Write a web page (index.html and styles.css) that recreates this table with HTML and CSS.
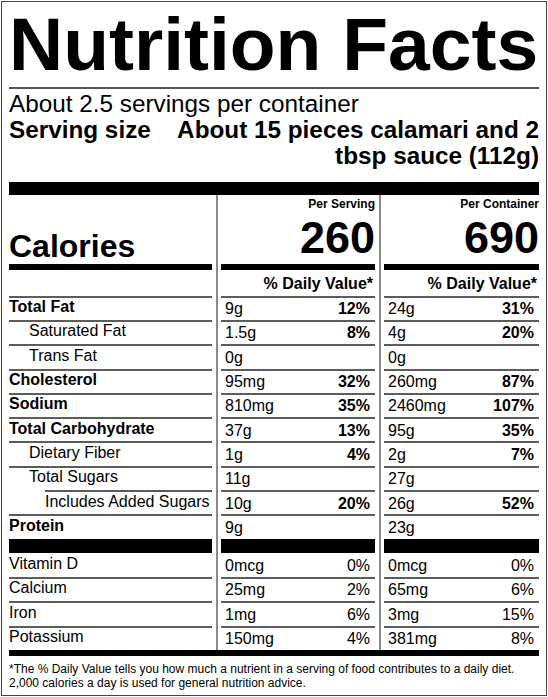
FILE: index.html
```html
<!DOCTYPE html>
<html lang="en">
<head>
<meta charset="utf-8">
<title>Nutrition Facts</title>
<link rel="stylesheet" href="styles.css">
</head>
<body>
<section class="label">
  <h1 class="title">Nutrition Facts</h1>
  <p class="servings">About 2.5 servings per container</p>
  <div class="serving-size">
    <span class="ss-label">Serving size</span>
    <span class="ss-value">About 15 pieces calamari and 2 tbsp sauce (112g)</span>
  </div>
  <div class="bar-top"></div>

  <div class="facts">
    <div class="row cal">
      <div class="cal-label">Calories</div>
      <div class="cal-val"><span class="per">Per Serving</span><span class="big">260</span></div>
      <div class="cal-val"><span class="per">Per Container</span><span class="big">690</span></div>
    </div>
    <div class="row dv-head">
      <div></div>
      <div class="dv">% Daily Value*</div>
      <div class="dv">% Daily Value*</div>
    </div>

    <div class="row">
      <div class="name b">Total Fat</div>
      <div class="val"><span>9g</span><span class="b">12%</span></div>
      <div class="val"><span>24g</span><span class="b">31%</span></div>
    </div>
    <div class="row">
      <div class="name sub">Saturated Fat</div>
      <div class="val"><span>1.5g</span><span class="b">8%</span></div>
      <div class="val"><span>4g</span><span class="b">20%</span></div>
    </div>
    <div class="row">
      <div class="name sub">Trans Fat</div>
      <div class="val"><span>0g</span></div>
      <div class="val"><span>0g</span></div>
    </div>
    <div class="row">
      <div class="name b">Cholesterol</div>
      <div class="val"><span>95mg</span><span class="b">32%</span></div>
      <div class="val"><span>260mg</span><span class="b">87%</span></div>
    </div>
    <div class="row">
      <div class="name b">Sodium</div>
      <div class="val"><span>810mg</span><span class="b">35%</span></div>
      <div class="val"><span>2460mg</span><span class="b">107%</span></div>
    </div>
    <div class="row">
      <div class="name b">Total Carbohydrate</div>
      <div class="val"><span>37g</span><span class="b">13%</span></div>
      <div class="val"><span>95g</span><span class="b">35%</span></div>
    </div>
    <div class="row">
      <div class="name sub">Dietary Fiber</div>
      <div class="val"><span>1g</span><span class="b">4%</span></div>
      <div class="val"><span>2g</span><span class="b">7%</span></div>
    </div>
    <div class="row">
      <div class="name sub">Total Sugars</div>
      <div class="val"><span>11g</span></div>
      <div class="val"><span>27g</span></div>
    </div>
    <div class="row">
      <div class="name sub2">Includes Added Sugars</div>
      <div class="val"><span>10g</span><span class="b">20%</span></div>
      <div class="val"><span>26g</span><span class="b">52%</span></div>
    </div>
    <div class="row">
      <div class="name b">Protein</div>
      <div class="val"><span>9g</span></div>
      <div class="val"><span>23g</span></div>
    </div>

    <div class="row bar"><div></div><div></div><div></div></div>

    <div class="row first">
      <div class="name">Vitamin D</div>
      <div class="val"><span>0mcg</span><span>0%</span></div>
      <div class="val"><span>0mcg</span><span>0%</span></div>
    </div>
    <div class="row">
      <div class="name">Calcium</div>
      <div class="val"><span>25mg</span><span>2%</span></div>
      <div class="val"><span>65mg</span><span>6%</span></div>
    </div>
    <div class="row">
      <div class="name">Iron</div>
      <div class="val"><span>1mg</span><span>6%</span></div>
      <div class="val"><span>3mg</span><span>15%</span></div>
    </div>
    <div class="row">
      <div class="name">Potassium</div>
      <div class="val"><span>150mg</span><span>4%</span></div>
      <div class="val"><span>381mg</span><span>8%</span></div>
    </div>
  </div>

  <div class="bar-bottom"></div>
  <p class="foot">*The % Daily Value tells you how much a nutrient in a serving of food contributes to a daily diet. 2,000 calories a day is used for general nutrition advice.</p>
</section>
</body>
</html>
```

FILE: styles.css
```css
* { box-sizing: border-box; }

html, body {
  margin: 0;
  padding: 0;
  background: #fff;
}

body {
  font-family: "Liberation Sans", Arial, sans-serif;
  color: #000;
}

.label {
  width: 546px;
  margin: 1px 1px 0;
  border: 1px solid #444;
  padding: 0 7px 5px;
}

.title {
  margin: 0;
  padding: 4.5px 0 5.5px;
  font-size: 75px;
  line-height: 75px;
  font-weight: 700;
  white-space: nowrap;
  border-bottom: 2px solid #555;
}

.servings {
  margin: 0;
  padding-top: 1.7px;
  font-size: 24.3px;
  line-height: 26px;
}

.serving-size {
  display: flex;
  font-size: 24.3px;
  line-height: 26px;
  font-weight: 700;
}

.ss-label { flex: none; }

.ss-value {
  flex: 1;
  text-align: right;
  padding-left: 20px;
}

.bar-top {
  height: 13px;
  margin-top: 13px;
  background: #000;
}

.facts {
  background:
    linear-gradient(#8a8a8a, #8a8a8a) 207px 0 / 2px 100% no-repeat,
    linear-gradient(#8a8a8a, #8a8a8a) 370px 0 / 2px 100% no-repeat;
}

.row {
  display: grid;
  grid-template-columns: 203px 154px 155px;
  column-gap: 9px;
  height: 24.3px;
}

.row > div {
  border-top: 2px solid #5c5c5c;
  font-size: 16px;
  line-height: 16px;
  white-space: nowrap;
}

/* Calories block */
.row.cal { height: 75px; }

.row.cal > div {
  border-top: 0;
  border-bottom: 6px solid #000;
  display: flex;
  flex-direction: column;
  justify-content: flex-end;
}

.cal-label {
  font-size: 32px !important;
  line-height: 32px !important;
  font-weight: 700;
  padding-bottom: 2px;
}

.cal-val {
  align-items: flex-end;
  padding-bottom: 4px;
  font-weight: 700;
}

.per {
  font-size: 12px;
  line-height: 12px;
  margin-bottom: 5px;
}

.big {
  font-size: 45px;
  line-height: 45px;
}

/* Daily value header */
.row.dv-head { height: 26px; }

.row.dv-head > div {
  border-top: 0;
  align-self: end;
}

.dv {
  font-weight: 700;
  text-align: right;
  padding: 0 2px 4px 0;
}

/* Nutrient rows */
.name { padding-top: 1.5px; }
.name.sub { padding-left: 20px; }
.name.sub2 { margin-left: 36px; }

.val {
  display: flex;
  justify-content: space-between;
  padding: 3.5px 5px 0 4px;
}

.b { font-weight: 700; }

.row.bar { height: 14px; }

.row.bar > div {
  border-top: 0;
  background: #000;
}

.row.first > div { border-top-color: transparent; }

.bar-bottom {
  height: 6px;
  background: #000;
}

.foot {
  margin: 6.2px 0 0;
  font-size: 12px;
  line-height: 14px;
}
```
